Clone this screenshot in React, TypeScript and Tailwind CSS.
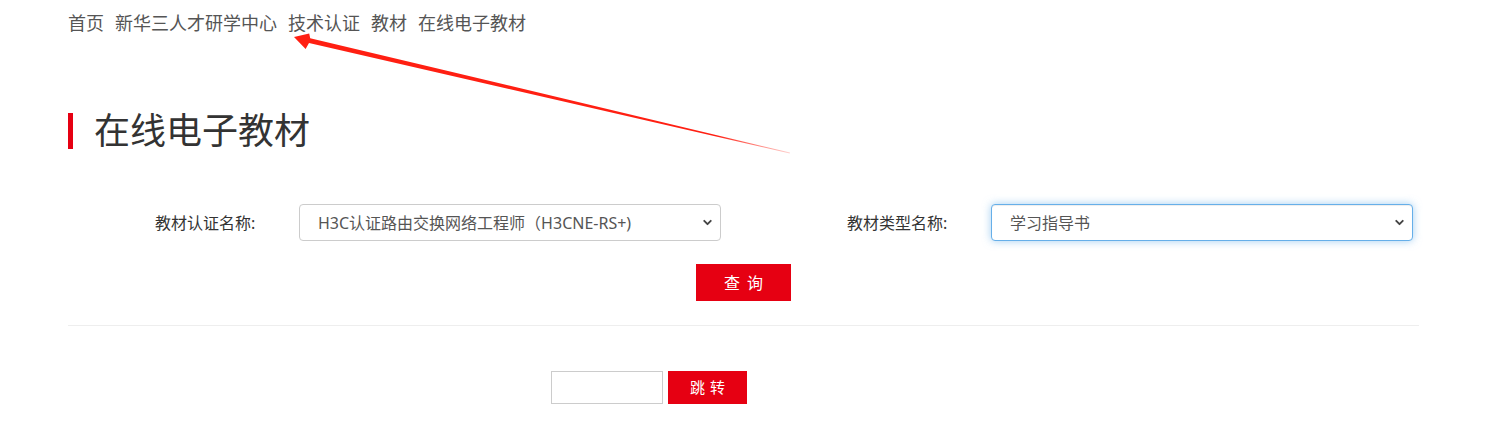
import { ChevronDown } from 'lucide-react';

const font = { fontFamily: '"Noto Sans", "Noto Sans CJK SC", sans-serif' };

function SelectBox({ value, focused }: { value: string; focused?: boolean }) {
  return (
    <div className="relative w-[422px] h-[37px]">
      <select
        defaultValue={value}
        className={
          'appearance-none w-full h-full rounded-[4px] bg-white pl-[18px] pr-8 text-[16px] text-[#555] outline-none ' +
          (focused
            ? 'border border-[#66afe9] shadow-[inset_0_1px_1px_rgba(0,0,0,0.075),0_0_8px_rgba(102,175,233,0.6)]'
            : 'border border-[#ccc]')
        }
      >
        <option>{value}</option>
      </select>
      <ChevronDown className="absolute right-[7px] top-[12px] text-[#444] pointer-events-none" size={13} strokeWidth={3.5} />
    </div>
  );
}

export default function App() {
  return (
    <div className="relative w-[1495px] h-[441px] bg-white overflow-hidden" style={font}>
      <div className="ml-[68px] w-[1351px]">
        {/* Breadcrumb */}
        <div className="pt-[10px] flex gap-[11px] text-[18px] leading-[26px] text-[#555]">
          <span>首页</span>
          <span>新华三人才研学中心</span>
          <span>技术认证</span>
          <span>教材</span>
          <span>在线电子教材</span>
        </div>

        {/* Title */}
        <div className="mt-[77px] flex items-center h-[36px]">
          <div className="w-[5px] h-[36px] bg-[#e60012]" />
          <h1 className="ml-[21px] text-[36px] leading-[36px] text-[#333]">在线电子教材</h1>
        </div>

        {/* Filters */}
        <div className="mt-[55px] flex">
          <div className="w-[692px] shrink-0 flex items-center">
            <label className="ml-[87px] w-[144px] text-[16px] text-[#333]">教材认证名称:</label>
            <SelectBox value="H3C认证路由交换网络工程师（H3CNE-RS+)" />
          </div>
          <div className="w-[659px] shrink-0 flex items-center">
            <label className="ml-[87px] w-[144px] text-[16px] text-[#333]">教材类型名称:</label>
            <SelectBox value="学习指导书" focused />
          </div>
        </div>

        <div className="mt-[23px] flex justify-center">
          <button className="w-[95px] h-[37px] bg-[#e60012] text-white text-[16px] tracking-[7px] pl-[7px]">查询</button>
        </div>

        <div className="mt-[24px] h-px bg-[#eee]" />

        {/* Pagination */}
        <div className="mt-[45px] ml-[483px] flex gap-[5px]">
          <input className="w-[112px] h-[33px] border border-[#ccc] outline-none px-2" />
          <button className="w-[79px] h-[33px] bg-[#e60012] text-white text-[15px] tracking-[5px] pl-[5px]">跳转</button>
        </div>
      </div>

      {/* annotation arrow */}
      <svg className="absolute left-0 top-0 pointer-events-none" width="1495" height="441">
        <defs>
          <linearGradient id="fade" x1="294" y1="37" x2="790" y2="153" gradientUnits="userSpaceOnUse">
            <stop offset="0" stopColor="#ff1f12" />
            <stop offset="0.85" stopColor="#ff1f12" />
            <stop offset="1" stopColor="#ff1f12" stopOpacity="0.2" />
          </linearGradient>
        </defs>
        <polygon
          points="294,37 309.2,33.4 310.2,38.2 790,152.6 789.8,153.4 309,43 305.6,49"
          fill="url(#fade)"
        />
      </svg>
    </div>
  );
}
